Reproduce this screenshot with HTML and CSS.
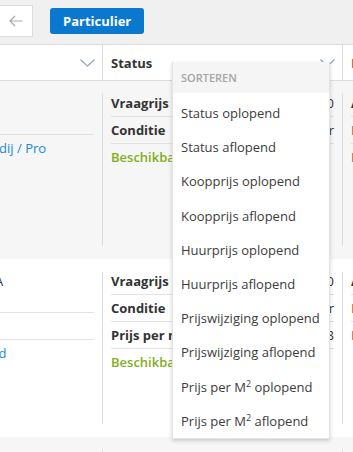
FILE: index.html
```html
<!DOCTYPE html>
<html lang="nl">
<head>
  <meta charset="UTF-8" />
  <meta name="viewport" content="width=device-width, initial-scale=1.0" />
  <title>Objecten – sorteren</title>
  <link rel="stylesheet" href="styles.css">
</head>
<body>
  <div class="toolbar">
    <button class="btn-back" title="Terug">
      <svg width="14" height="12" viewBox="0 0 14 12"><path d="M13.5 6H1 M6 1L1 6l5 5" fill="none" stroke="#a9a9a9" stroke-width="1.2"/></svg>
    </button>
    <button class="btn-primary">Particulier</button>
  </div>

  <div class="table-wrap">
    <div class="table">
      <div class="thead">
        <div class="th col-object">
          <span>Object</span>
          <svg class="chevron" width="15" height="8" viewBox="0 0 15 8"><path d="M0.5 0.5L7.5 7.2L14.5 0.5" fill="none" stroke="#8ea3ba" stroke-width="1.1"/></svg>
        </div>
        <div class="th col-status">
          <span>Status</span>
          <svg class="chevron" width="15" height="8" viewBox="0 0 15 8"><path d="M0.5 0.5L7.5 7.2L14.5 0.5" fill="none" stroke="#8ea3ba" stroke-width="1.1"/></svg>
        </div>
        <div class="th col-extra accent">Publicatie</div>
      </div>

      <div class="tr odd">
        <div class="td col-object">
          <div class="item">Laan 3<br>Utrecht</div>
          <div class="item link">Makelaardij / Pro</div>
        </div>
        <div class="td col-status">
          <div class="item"><b>Vraagrijs</b><span>€ 425.000</span></div>
          <div class="item"><b>Conditie</b><span>Opknapper</span></div>
          <div class="item ok">Beschikbaar</div>
        </div>
        <div class="td col-extra">
          <div class="item"><b>Aangeboden</b></div>
          <div class="item accent">Bekijk details</div>
          <div class="item accent">Bekijk foto's</div>
        </div>
      </div>

      <div class="tr">
        <div class="td col-object">
          <div class="item">Kade 14 A<br>Leiden</div>
          <div class="item">&nbsp;</div>
          <div class="item link">Doornveld</div>
        </div>
        <div class="td col-status">
          <div class="item"><b>Vraagrijs</b><span>€ 389.000</span></div>
          <div class="item"><b>Conditie</b><span>Opknapper</span></div>
          <div class="item"><b>Prijs per m²</b><span>€ 4.418</span></div>
          <div class="item ok">Beschikbaar</div>
        </div>
        <div class="td col-extra">
          <div class="item"><b>Aangeboden</b></div>
          <div class="item accent">Bekijk details</div>
          <div class="item accent">Bekijk foto's</div>
        </div>
      </div>

      <div class="tr odd">
        <div class="td col-object"></div>
        <div class="td col-status"></div>
        <div class="td col-extra"></div>
      </div>
    </div>
  </div>

  <div class="sort-menu">
    <div class="sort-title">Sorteren</div>
    <ul>
      <li>Status oplopend</li>
      <li>Status aflopend</li>
      <li>Koopprijs oplopend</li>
      <li>Koopprijs aflopend</li>
      <li>Huurprijs oplopend</li>
      <li>Huurprijs aflopend</li>
      <li>Prijswijziging oplopend</li>
      <li>Prijswijziging aflopend</li>
      <li>Prijs per M<sup>2</sup> oplopend</li>
      <li>Prijs per M<sup>2</sup> aflopend</li>
    </ul>
  </div>
</body>
</html>
```

FILE: styles.css
```css
body {
  font-family: 'Open Sans', 'Noto Sans', sans-serif;
  font-size: 13px;
  color: #333;
  background: #f0f0f0;
  margin: 0;
  padding: 0;
  overflow: hidden;
}
.toolbar {
  display: flex;
  align-items: center;
  gap: 17px;
  height: 42px;
  padding-bottom: 2px;
}
.btn-back {
  width: 33px;
  height: 32px;
  padding: 0;
  border: 1px solid #ddd;
  border-left: none;
  background: #fff;
  display: flex;
  align-items: center;
  justify-content: center;
  padding-right: 1px;
}
.btn-primary {
  height: 26px;
  padding: 0 13px;
  border: none;
  border-radius: 3px;
  background: #0a78cf;
  color: #fff;
  font-family: inherit;
  font-size: 13px;
  font-weight: 700;
}
.table-wrap {
  overflow: hidden;
}
.table {
  margin-left: -65px;
  width: 600px;
}
.thead {
  display: flex;
  background: #fff;
  border-top: 1px solid #dcdcdc;
  border-bottom: 1px solid #dcdcdc;
  height: 35px;
}
.th {
  display: flex;
  align-items: center;
  justify-content: space-between;
  font-weight: 700;
  padding: 0 8px;
}
.th .chevron {
  margin-right: -1px;
}
.col-object {
  width: 167px;
  box-sizing: border-box;
  padding: 0 8px;
}
.col-status {
  width: 240px;
  box-sizing: border-box;
  padding: 0 8px;
  border-left: 1px solid #dcdcdc;
}
.col-extra {
  width: 193px;
  box-sizing: border-box;
  padding: 0 8px;
  border-left: 1px solid #dcdcdc;
}
.tr {
  display: flex;
  padding: 13px 0;
  background: #fff;
}
.tr.odd {
  background: #f6f6f6;
}
.td {
  height: 152px;
  white-space: nowrap;
}
.item {
  display: flex;
  justify-content: space-between;
  line-height: 18px;
  padding: 4px 0;
  border-bottom: 1px solid #e2e2e2;
}
.item:first-child {
  padding-top: 0;
}
.item:last-child {
  border-bottom: none;
}
.col-object .item {
  display: block;
}
.link {
  color: #1a89d6;
}
.ok {
  color: #84ad1c;
  font-weight: 600;
}
.accent {
  color: #b0602c;
}
.sort-menu {
  position: absolute;
  top: 62px;
  left: 172px;
  width: 156px;
  background: #fff;
  border: 1px solid #e4e4e4;
  border-top: none;
  box-shadow: 0 2px 4px rgba(0, 0, 0, 0.18);
}
.sort-title {
  height: 31px;
  line-height: 31px;
  padding: 0 8px;
  background: #f5f5f5;
  color: #a5a5a5;
  font-size: 11px;
  font-weight: 600;
  text-transform: uppercase;
}
.sort-menu ul {
  list-style: none;
  margin: 0;
  padding: 3px 0 0;
}
.sort-menu li {
  padding: 8px 8px;
  line-height: 18.2px;
  color: #3c3c3c;
  white-space: nowrap;
}
.sort-menu sup {
  font-size: 9px;
  line-height: 0;
}
```
